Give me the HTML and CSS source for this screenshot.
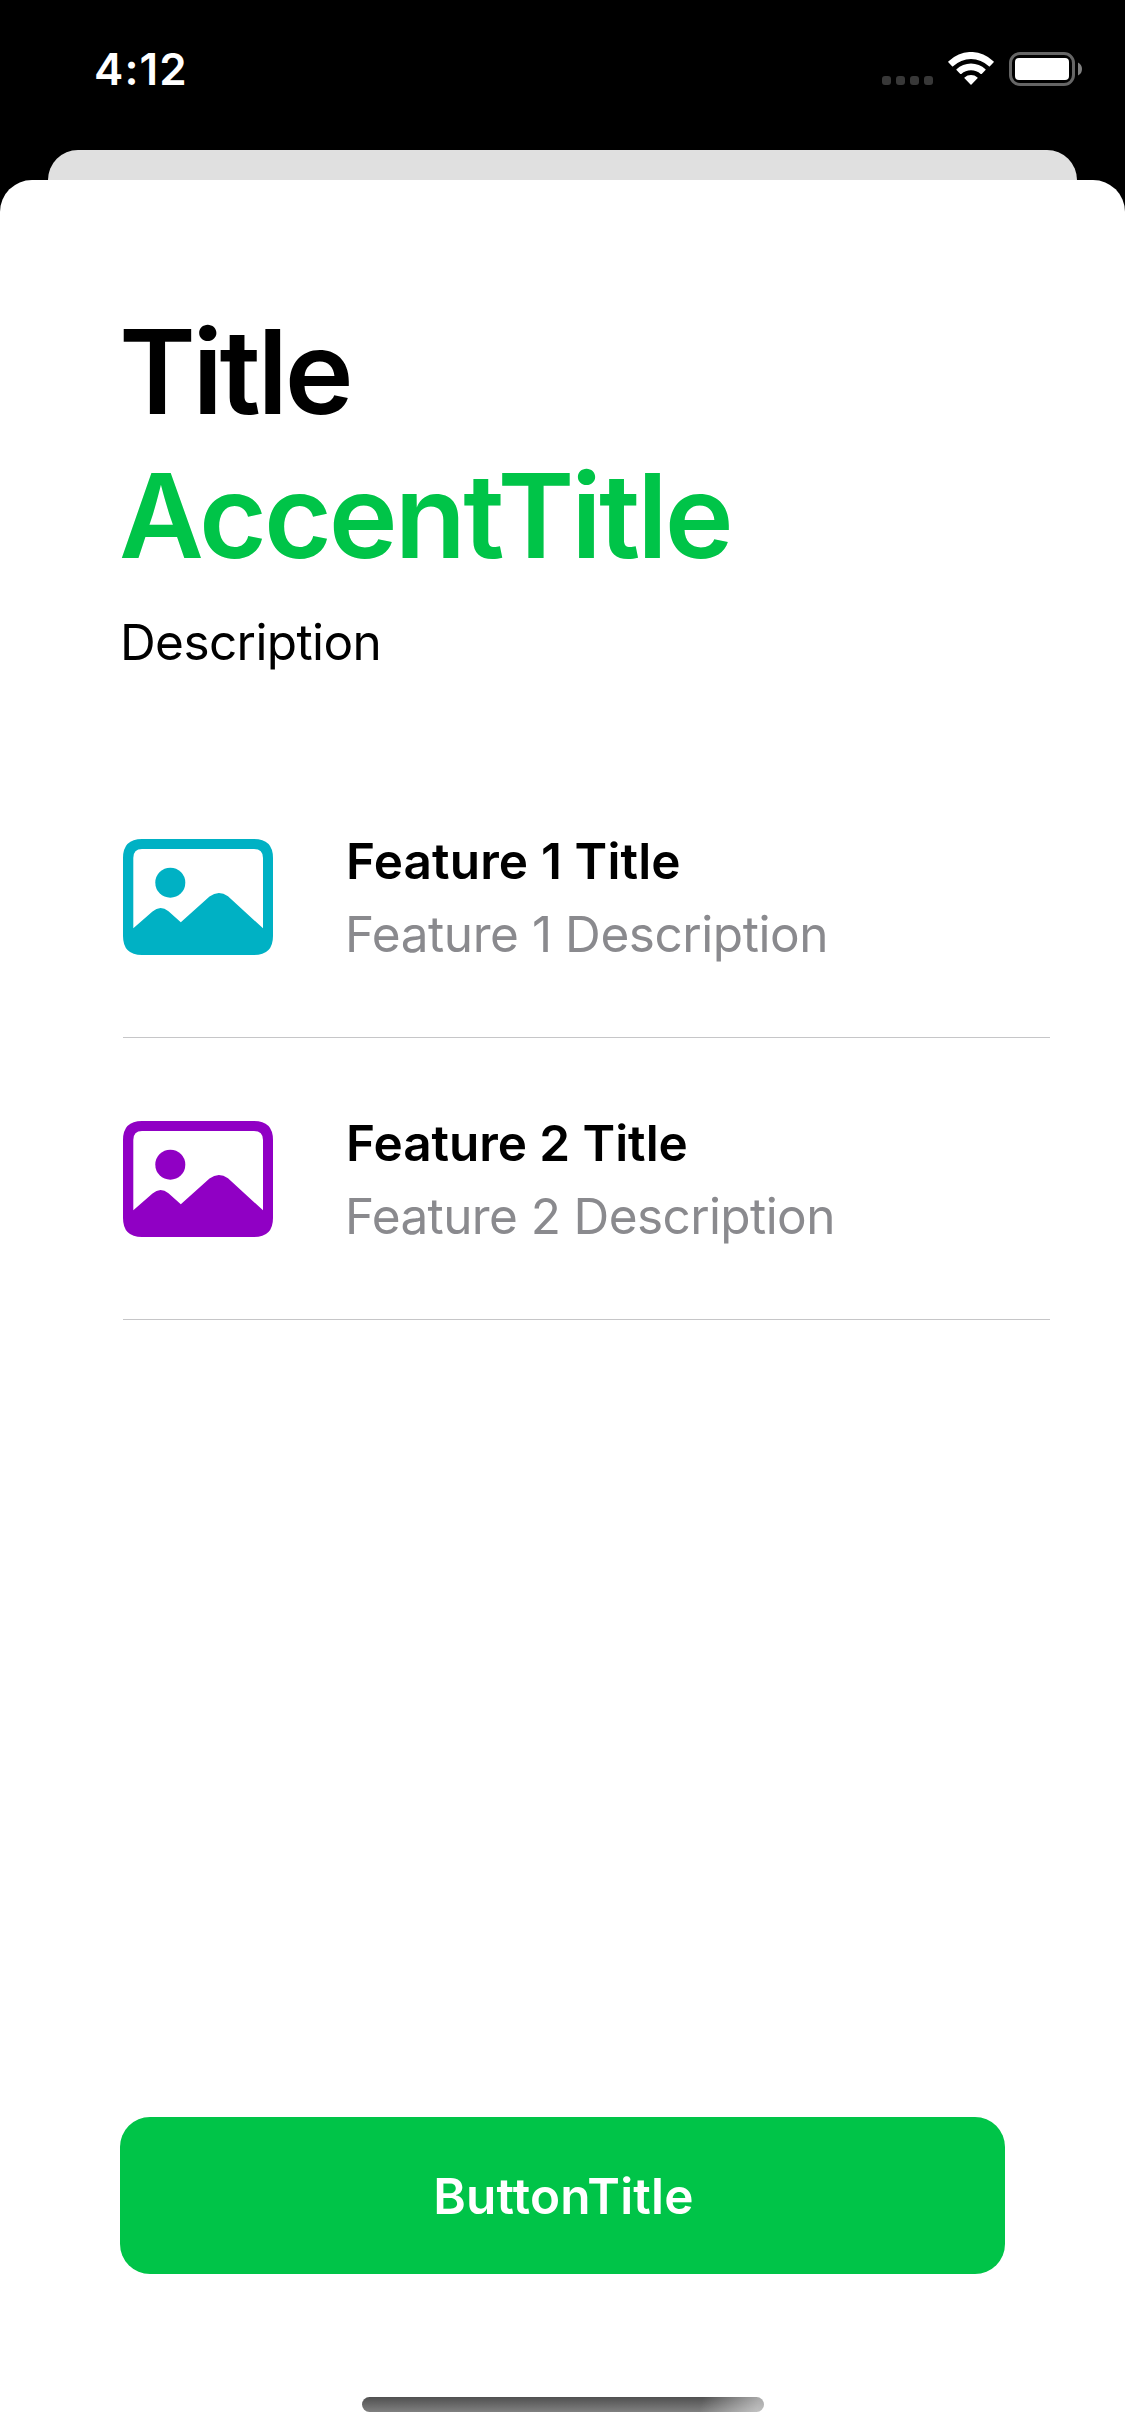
FILE: index.html
```html
<!DOCTYPE html>
<html lang="en">
<head>
<meta charset="utf-8">
<title>Title</title>
<link rel="stylesheet" href="styles.css">
</head>
<body>
<div class="screen">
  <header class="status">
    <span class="time">4:12</span>
    <div class="indicators">
      <svg class="dots" width="51" height="34" viewBox="0 0 51 34" fill="#383838">
        <rect x="0" y="24" width="9" height="9" rx="3"/><rect x="14" y="24" width="9" height="9" rx="3"/><rect x="28" y="24" width="9" height="9" rx="3"/><rect x="42" y="24" width="9" height="9" rx="3"/>
      </svg>
      <svg class="wifi" width="46" height="34" viewBox="0 0 46 34" fill="#fff">
        <path d="M.3 9.400A32 32 0 0 1 45.700 9.400Q46.100 9.800 45.700 10.200L41.900 14.200Q41.400 14.600 40.900 14.200A26 26 0 0 0 5.100 14.200Q4.600 14.600 4.100 14.200L.3 10.200Q-.1 9.800 .3 9.400Z"/>
        <path d="M8.500 17.200A21 21 0 0 1 37.500 17.200Q37.900 17.600 37.500 18L33.700 21.900Q33.200 22.300 32.700 21.900A14.500 14.500 0 0 0 13.300 21.900Q12.800 22.300 12.300 21.900L8.500 18Q8.100 17.600 8.500 17.200Z"/>
        <path d="M16.500 25.500A10 10 0 0 1 29.500 25.500Q29.900 25.900 29.500 26.300L23.500 32.500Q23 33 22.500 32.500L16.500 26.300Q16.100 25.900 16.500 25.500Z"/>
      </svg>
      <svg class="battery" width="74" height="34" viewBox="0 0 74 34">
        <rect x="1.500" y="1.500" width="63" height="31" rx="9.500" fill="none" stroke="#666" stroke-width="3"/>
        <rect x="6" y="6" width="54" height="22" rx="4" fill="#fff"/>
        <path d="M69 10.500Q73 12.500 73 17T69 23.500Z" fill="#808080"/>
      </svg>
    </div>
  </header>
  <div class="behind"></div>
  <main class="sheet">
    <h1 class="title">Title</h1>
    <h1 class="title accent">AccentTitle</h1>
    <p class="description">Description</p>
    <ul class="features">
      <li class="feature">
        <svg class="photo teal" width="150" height="116" viewBox="0 0 150 116" fill="currentColor">
          <path fill-rule="evenodd" d="M19 0H131Q150 0 150 19V97Q150 116 131 116H19Q0 116 0 97V19Q0 0 19 0ZM19 10Q10.300 10 10.300 19V89.300L29.500 72.500Q37.200 65.500 45.500 72.200L57.800 83.200L86.500 57.500Q95.600 50.500 105 57.200L140 89.300V19Q140 10 131 10Z"/>
          <circle cx="47.300" cy="43.700" r="15"/>
        </svg>
        <div class="text">
          <h2 class="name name-one">Feature 1 Title</h2>
          <p class="detail detail-one">Feature 1 Description</p>
        </div>
      </li>
      <li class="feature">
        <svg class="photo purple" width="150" height="116" viewBox="0 0 150 116" fill="currentColor">
          <path fill-rule="evenodd" d="M19 0H131Q150 0 150 19V97Q150 116 131 116H19Q0 116 0 97V19Q0 0 19 0ZM19 10Q10.300 10 10.300 19V89.300L29.500 72.500Q37.200 65.500 45.500 72.200L57.800 83.200L86.500 57.500Q95.600 50.500 105 57.200L140 89.300V19Q140 10 131 10Z"/>
          <circle cx="47.300" cy="43.700" r="15"/>
        </svg>
        <div class="text">
          <h2 class="name">Feature 2 Title</h2>
          <p class="detail">Feature 2 Description</p>
        </div>
      </li>
    </ul>
    <button class="button" type="button">ButtonTitle</button>
    <div class="home"></div>
  </main>
</div>
</body>
</html>
```
FILE: styles.css
```css
* { box-sizing: border-box; }
body, h1, h2, p, ul { margin: 0; padding: 0; }
body { background: #000; font-family: Inter, "Liberation Sans", sans-serif; }

.screen {
  width: 1125px;
  height: 2436px;
  display: flex;
  flex-direction: column;
  overflow: hidden;
  background: #000;
}

.status {
  height: 150px;
  flex: none;
  display: flex;
  justify-content: space-between;
  align-items: flex-start;
  padding: 52px 42px 0 94px;
}
.time {
  color: #fff;
  font-size: 44px;
  font-weight: 600;
  line-height: 34px;
  letter-spacing: 1.1px;
}
.indicators { display: flex; }
.wifi { margin: 0 15px 0 15px; }

.behind {
  height: 60px;
  flex: none;
  margin: 0 48px -30px;
  background: #e0e0e0;
  border-radius: 30px 30px 0 0;
}

.sheet {
  flex: 1;
  display: flex;
  flex-direction: column;
  padding: 120px 75px 24px 120px;
  background: #fff;
  border-radius: 32px 32px 0 0;
}
.title {
  margin-left: -1px;
  font-size: 116.5px;
  font-weight: 600;
  line-height: 144px;
  letter-spacing: -3.4px;
}
.accent { color: #00c448; letter-spacing: -2.95px; }
.description {
  margin-top: 24px;
  font-size: 49.5px;
  line-height: 60px;
  letter-spacing: -.6px;
}

.features { list-style: none; margin: 84px 0 0 3px; }
.feature {
  height: 282px;
  display: flex;
  align-items: center;
  gap: 72px;
  border-bottom: 1px solid #c6c6c8;
}
.teal { color: #00b1c4; }
.purple { color: #9000c4; }
.text { padding-top: 3px; font-size: 49.5px; line-height: 73px; }
.name { margin-left: 1px; font-size: inherit; font-weight: 600; letter-spacing: -.05px; }
.name-one { letter-spacing: .14px; }
.detail { color: #8a8a8e; letter-spacing: -.6px; }
.detail-one { letter-spacing: -.44px; }

.button {
  height: 157px;
  margin: auto 45px 0 0;
  padding: 0 0 0 2px;
  border: 0;
  border-radius: 30px;
  background: #00c448;
  color: #fff;
  font: 600 49.5px/60px Inter, "Liberation Sans", sans-serif;
  letter-spacing: .2px;
}
.home {
  width: 402px;
  height: 15px;
  margin: 123px 0 0 242px;
  border-radius: 8px;
  background: linear-gradient(105deg, transparent 84%, rgba(255, 255, 255, .5) 98%), linear-gradient(#505050, #808080);
}
```
